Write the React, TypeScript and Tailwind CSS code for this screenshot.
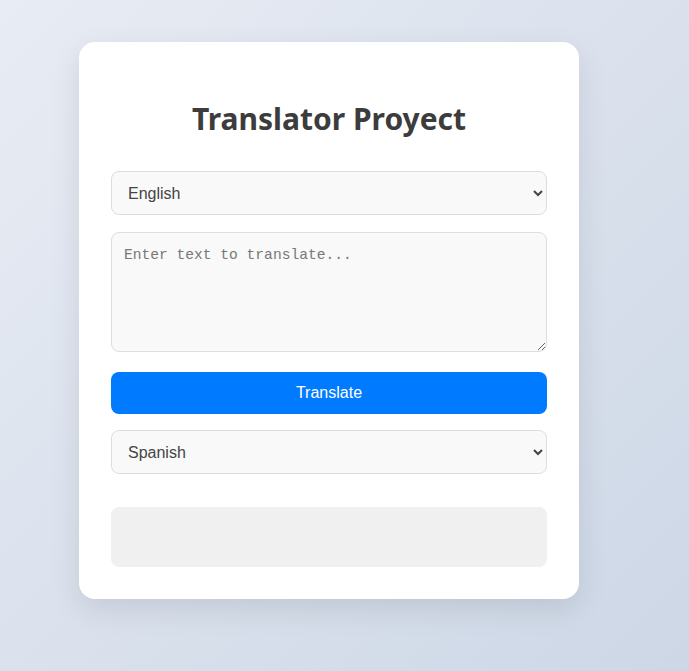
import React from "react";

export default function App() {
  return (
    <div className="min-h-screen w-full bg-[linear-gradient(135deg,#e8ecf4_0%,#cdd7e6_100%)] pt-[42px] pb-10">
      <div className="ml-[79px] w-[500px] rounded-[16px] bg-white px-8 pt-[53px] pb-[32px] shadow-[0_10px_30px_rgba(0,0,0,0.1)]">
        <h1 className="mb-[28px] text-center text-[30px] font-bold leading-[48px] text-[#3c3c3c] [font-family:'Noto_Sans',sans-serif]">
          Translator Proyect
        </h1>
        <select
          defaultValue="en"
          className="block h-[44px] w-full rounded-[8px] border border-[#dddddd] bg-[#f9f9f9] pl-[12px] pr-2 text-[16px] text-[#444] [font-family:'Liberation_Sans',Arial,sans-serif] outline-none"
        >
          <option value="en">English</option>
          <option value="es">Spanish</option>
        </select>
        <textarea
          placeholder="Enter text to translate..."
          className="mt-[17px] block h-[120px] w-full resize-y rounded-[8px] border border-[#dddddd] bg-[#f9f9f9] px-[12px] py-[12px] text-[14.6px] leading-[20px] text-[#444] placeholder:text-[#777] [font-family:'Liberation_Mono',monospace] outline-none"
        />
        <button className="mt-[20px] block h-[42px] w-full rounded-[8px] bg-[#007bff] text-[16px] text-white [font-family:'Liberation_Sans',Arial,sans-serif]">
          Translate
        </button>
        <select
          defaultValue="es"
          className="mt-[16px] block h-[44px] w-full rounded-[8px] border border-[#dddddd] bg-[#f9f9f9] pl-[12px] pr-2 text-[16px] text-[#444] [font-family:'Liberation_Sans',Arial,sans-serif] outline-none"
        >
          <option value="en">English</option>
          <option value="es">Spanish</option>
        </select>
        <div className="mt-[33px] h-[60px] w-full rounded-[8px] bg-[#f0f0f0]" />
      </div>
    </div>
  );
}
